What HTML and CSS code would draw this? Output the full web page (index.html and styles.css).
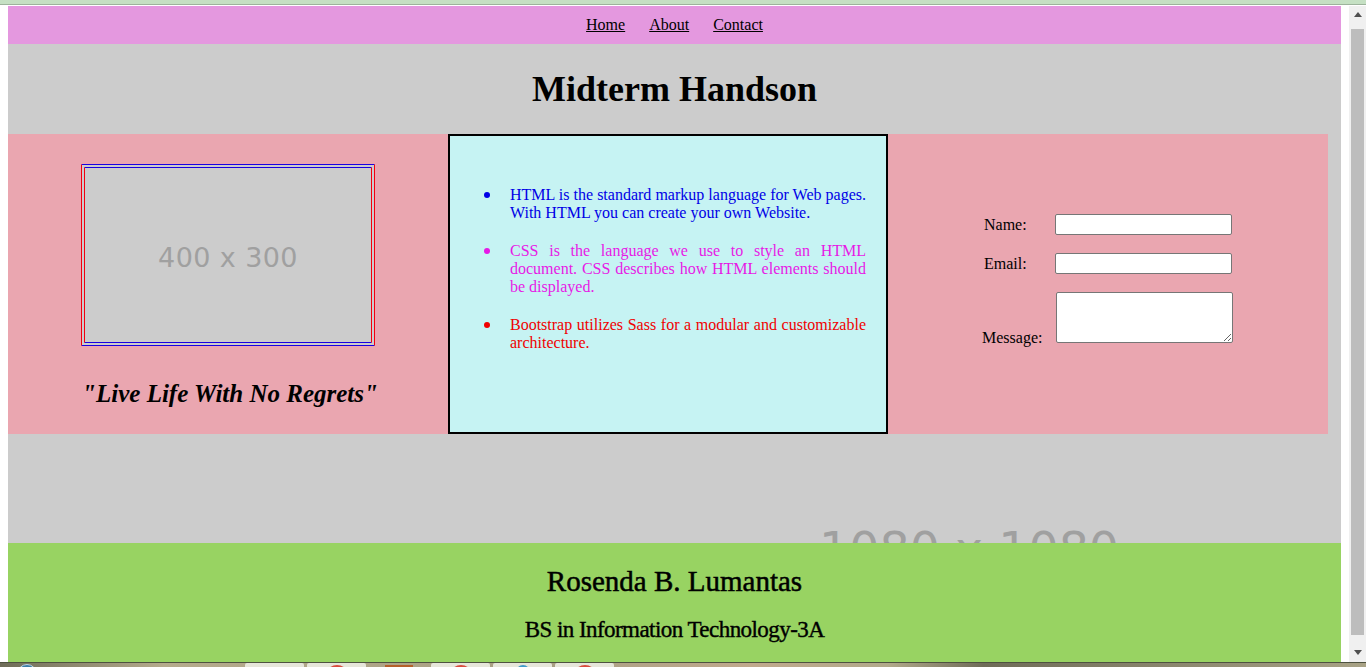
FILE: index.html
```html
<!DOCTYPE html>
<html>
<head>
    <meta charset="utf-8">
    <title>Midterm Handson</title>
    <link rel="stylesheet" href="styles.css">
</head>
<body>
    <div class="top-strip"></div>
    <div class="window">
        <div class="page">
            <nav class="nav">
                <a href="#">Home</a>
                <a href="#">About</a>
                <a href="#">Contact</a>
            </nav>
            <main class="content">
                <span class="bg-label">1080 x 1080</span>
                <h1 class="title">Midterm Handson</h1>
                <div class="row">
                    <section class="col col-photo">
                        <div class="photo">400 x 300</div>
                        <p class="quote">"Live Life With No Regrets"</p>
                    </section>
                    <section class="col col-list">
                        <ul class="facts">
                            <li class="blue">HTML is the standard markup language for Web pages. With HTML you can create your own Website.</li>
                            <li class="magenta">CSS is the language we use to style an HTML document. CSS describes how HTML elements should be displayed.</li>
                            <li class="red">Bootstrap utilizes Sass for a modular and customizable architecture.</li>
                        </ul>
                    </section>
                    <section class="col col-form">
                        <form class="contact">
                            <div class="field">
                                <label class="short" for="name">Name:</label>
                                <input id="name" type="text">
                            </div>
                            <div class="field">
                                <label class="short" for="email">Email:</label>
                                <input id="email" type="text">
                            </div>
                            <div class="field">
                                <label class="long" for="message">Message:</label>
                                <textarea id="message"></textarea>
                            </div>
                        </form>
                    </section>
                </div>
            </main>
            <footer class="footer">
                <h2>Rosenda B. Lumantas</h2>
                <h3>BS in Information Technology-3A</h3>
            </footer>
        </div>
        <div class="scrollbar">
            <span class="arrow arrow-up"></span>
            <span class="thumb"></span>
            <span class="arrow arrow-down"></span>
        </div>
    </div>
    <div class="taskbar">
        <span class="orb"></span>
        <span class="task"><i class="dot grey"></i></span>
        <span class="task"><i class="dot tomato"></i></span>
        <span class="task flat"><i class="dot orange"></i></span>
        <span class="task"><i class="dot tomato"></i></span>
        <span class="task"><i class="dot sky"></i></span>
        <span class="task"><i class="dot tomato"></i></span>
    </div>
</body>
</html>
```

FILE: styles.css
```css
html, body {
    height: 100%;
    margin: 0;
    overflow: hidden;
}
body {
    display: flex;
    flex-direction: column;
    background: #fff;
    color: #000;
    font-family: "Liberation Serif", serif;
    font-size: 16px;
}

.top-strip {
    height: 4px;
    margin-bottom: 1px;
    background: #c5e0c3;
    border-bottom: 1px solid #9db39c;
}

.window {
    display: flex;
    height: 656px;
}
.page {
    display: flex;
    flex-direction: column;
    width: 1333px;
    padding: 0 8px;
}

.nav {
    display: flex;
    justify-content: center;
    align-items: center;
    gap: 24px;
    height: 38px;
    background: #e498df;
}
.nav a {
    color: #000;
}

.content {
    position: relative;
    height: 499px;
    overflow: hidden;
    background: #ccc;
}
.bg-label {
    position: absolute;
    left: 811px;
    top: 471px;
    color: #a0a0a0;
    font-family: "DejaVu Sans", sans-serif;
    font-size: 47.5px;
    line-height: 70px;
    white-space: nowrap;
}
.title {
    position: relative;
    height: 90px;
    margin: 0;
    font-size: 36px;
    line-height: 90px;
    text-align: center;
}

.row {
    position: relative;
    display: flex;
    width: 1320px;
    height: 300px;
}
.col {
    width: 440px;
    box-sizing: border-box;
    background: #eaa6b0;
}

.col-photo {
    display: flex;
    flex-direction: column;
    align-items: center;
    padding: 30px 0 0 0;
}
.photo {
    display: flex;
    justify-content: center;
    align-items: center;
    width: 294px;
    height: 182px;
    box-sizing: border-box;
    padding-top: 4px;
    border: 4px double;
    border-color: #1a00e0 #f00010;
    background: #ccc;
    color: #a0a0a0;
    font-family: "DejaVu Sans", sans-serif;
    font-size: 27px;
    letter-spacing: 0.4px;
}
.quote {
    margin: 30px 0 0 4px;
    font-family: "Liberation Serif", cursive;
    font-size: 25px;
    font-style: italic;
    font-weight: bold;
    line-height: 36px;
    white-space: nowrap;
}

.col-list {
    border: 2px solid #000;
    background: #c6f3f3;
}
.facts {
    margin: 50px 20px 0 0;
    padding: 0 0 0 60px;
    list-style: none;
    font-size: 16px;
    line-height: 18px;
    text-align: justify;
}
.facts li {
    position: relative;
    margin-bottom: 20px;
}
.facts li::before {
    content: "";
    position: absolute;
    left: -26px;
    top: 6px;
    width: 6px;
    height: 6px;
    border-radius: 50%;
    background: currentColor;
}
.blue { color: #0000e6; }
.magenta { color: #e619e6; }
.red { color: #f00000; }

.col-form {
    padding: 80px 0 0 94px;
}
.field {
    display: flex;
    align-items: center;
    margin-bottom: 18px;
}
.field label.short {
    width: 73px;
    padding-left: 2px;
    box-sizing: border-box;
}
.field label.long {
    width: 74px;
    align-self: flex-end;
    margin-bottom: -4px;
}
.field input, .field textarea {
    width: 177px;
    box-sizing: border-box;
    margin: 0;
    border: 1px solid #767676;
    border-radius: 2px;
    background: #fff;
}
.field input {
    height: 21px;
}
.field textarea {
    height: 51px;
}

.footer {
    display: flex;
    flex-direction: column;
    align-items: center;
    height: 119px;
    background: #98d362;
}
.footer h2 {
    margin: 22px 0 0;
    font-size: 29px;
    font-weight: normal;
    line-height: 32px;
    -webkit-text-stroke: 0.5px #000;
}
.footer h3 {
    margin: 20px 0 0;
    font-size: 23px;
    font-weight: normal;
    letter-spacing: -0.55px;
    line-height: 26px;
    -webkit-text-stroke: 0.4px #000;
}

.scrollbar {
    display: flex;
    flex-direction: column;
    align-items: center;
    width: 17px;
    background: #f0f0f0;
}
.thumb {
    width: 13px;
    height: 606px;
    margin-top: 12px;
    background: #bdbdbd;
}
.arrow {
    width: 0;
    height: 0;
    border-left: 4px solid transparent;
    border-right: 4px solid transparent;
}
.arrow-up {
    margin-top: 6px;
    border-bottom: 5px solid #505050;
}
.arrow-down {
    margin-top: 15px;
    border-top: 5px solid #505050;
}

.taskbar {
    display: flex;
    height: 5px;
    overflow: hidden;
    border-top: 1px solid #4e5240;
    box-sizing: border-box;
    background: linear-gradient(90deg, #6e6c58, #b5ab8c 12%, #a89f83 40%, #c0a98c 55%, #b1a98a 65%, #6f6c58 72%, #a8a285 100%);
}
.orb {
    width: 20px;
    height: 20px;
    margin: 1px 208px 0 17px;
    box-sizing: border-box;
    border: 1px solid #bcd6e6;
    border-radius: 50%;
    background: #3d7ea6;
}
.task {
    display: flex;
    justify-content: center;
    width: 59px;
    height: 10px;
    margin-right: 3px;
    background: #e6e6da;
    border-radius: 2px;
}
.task.flat {
    width: 63px;
    margin-left: -2px;
    margin-right: 1px;
    background: none;
}
.dot {
    width: 24px;
    height: 12px;
    margin-top: 2px;
    border-radius: 12px 12px 0 0;
}
.grey { background: #e6e6da; }
.tomato { background: #d94a3c; }
.orange { width: 28px; border-radius: 0; background: #b5602a; }
.sky { width: 14px; background: #3f9bc9; }
```
